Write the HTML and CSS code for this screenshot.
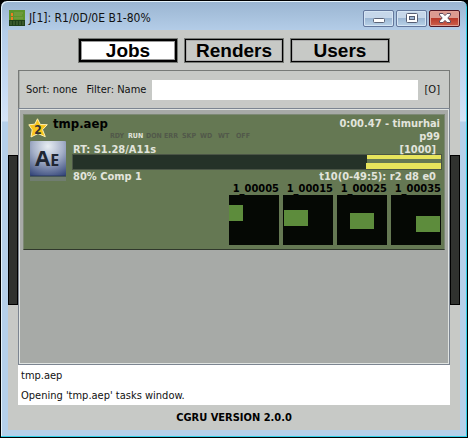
FILE: index.html
```html
<!DOCTYPE html>
<html lang="en">
<head>
<meta charset="utf-8">
<title>J[1]: R1/0D/0E B1-80%</title>
<link rel="stylesheet" href="styles.css">
</head>
<body>
<div class="window">
  <header class="titlebar">
    <svg class="app-icon" viewBox="0 0 16 16" aria-hidden="true">
      <rect width="16" height="16" fill="#5d942c"/>
      <rect y="10" width="16" height="6" fill="#20401a"/>
      <path d="M5 3h9M5 5h8M5 8h9" stroke="#82a04c"/>
      <path d="M1 12h14M1 14h14" stroke="#50713c" stroke-dasharray="2 1"/>
      <rect x="2" y="3" width="2" height="3" fill="#ef7a24"/>
      <rect x="2" y="7" width="2" height="3" fill="#ef7a24"/>
    </svg>
    <h1 class="title">J[1]: R1/0D/0E B1-80%</h1>
    <div class="controls">
      <button class="control" type="button" aria-label="Minimize">
        <svg viewBox="0 0 12 12"><rect x=".5" y="6.500" width="11" height="4" rx="1" fill="#fff" stroke="#5c6478"/></svg>
      </button>
      <button class="control" type="button" aria-label="Maximize">
        <svg viewBox="0 0 12 12"><rect x=".5" y="1.500" width="11" height="9" rx="1" fill="#fff" stroke="#565e74"/><rect x="3.500" y="4.500" width="5" height="3" fill="#9db5d2" stroke="#565e74"/></svg>
      </button>
      <button class="control close" type="button" aria-label="Close">
        <svg viewBox="0 0 12 12"><path d="M.5 1.500h3.500L6 3.600 8 1.500h3.500V3L8.800 6l2.700 3v1.500H8L6 8.400 4 10.500H.5V9l2.700-3L.5 3z" fill="#fff" stroke="#5f4a5c"/></svg>
      </button>
    </div>
  </header>
  <div class="client">
    <button class="rail" type="button" aria-label="Left panel"></button>
    <main class="content">
      <nav class="tabs">
        <button class="tab active" type="button">Jobs</button>
        <button class="tab" type="button">Renders</button>
        <button class="tab" type="button">Users</button>
      </nav>
      <div class="toolbar">
        <span>Sort: none</span>
        <label for="filter">Filter: Name</label>
        <input class="filter" id="filter" type="text">
        <span>[O]</span>
      </div>
      <section class="list">
        <article class="job">
          <div class="icons">
            <svg class="star" viewBox="0 0 20 20" role="img" aria-label="2">
              <path d="M9.500.8l2.800 5.700 7 .2-4.800 5 2.800 7-7.300-3.200L3 19l1.200-7.200L.8 6.800l6-.6z" fill="#f8c51c" stroke="#fff0b0" stroke-linejoin="round"/>
              <text class="star-text" x="10" y="16" text-anchor="middle">2</text>
            </svg>
            <svg class="service" viewBox="0 0 36 40" role="img" aria-label="AE">
              <defs>
                <radialGradient id="tile" cx=".5" cy=".15" r=".95">
                  <stop offset="0" stop-color="#e8eef2"/>
                  <stop offset=".45" stop-color="#a5b0c8"/>
                  <stop offset="1" stop-color="#334579"/>
                </radialGradient>
              </defs>
              <rect y="36" width="36" height="4" fill="#707d70"/>
              <rect width="36" height="35" rx="1" fill="url(#tile)"/>
              <path d="M0 35h36" stroke="#28365e"/>
              <text class="service-text" x="5" y="25">A<tspan class="service-small">E</tspan></text>
            </svg>
          </div>
          <h2 class="name">tmp.aep</h2>
          <div class="meta">0:00.47 - timurhai</div>
          <div class="states">
            <span>RDY</span><span class="on">RUN</span><span>DON</span><span>ERR</span><span>SKP</span><span>WD</span><span>WT</span><span>OFF</span>
          </div>
          <div class="meta">p99</div>
          <div class="run">RT: S1.28/A11s</div>
          <div class="meta inset">[1000]</div>
          <div class="progress">
            <i class="fill" style="margin-left:80%"></i>
            <i class="fill thick" style="margin-left:79.500%"></i>
          </div>
          <div class="block">80% Comp 1</div>
          <div class="meta inset">t10(0-49:5): r2 d8 e0</div>
          <div class="thumbs">
            <figure class="thumb"><figcaption>1_00005</figcaption><svg viewBox="0 0 50 50"><rect width="50" height="50" fill="#050804"/><rect y="10" width="14" height="16" fill="#5d8c3c"/></svg></figure>
            <figure class="thumb"><figcaption>1_00015</figcaption><svg viewBox="0 0 50 50"><rect width="50" height="50" fill="#050804"/><rect x="1" y="15" width="24" height="16" fill="#5d8c3c"/></svg></figure>
            <figure class="thumb"><figcaption>1_00025</figcaption><svg viewBox="0 0 50 50"><rect width="50" height="50" fill="#050804"/><rect x="13" y="18" width="24" height="16" fill="#5d8c3c"/></svg></figure>
            <figure class="thumb"><figcaption>1_00035</figcaption><svg viewBox="0 0 50 50"><rect width="50" height="50" fill="#050804"/><rect x="25" y="21" width="24" height="16" fill="#5d8c3c"/></svg></figure>
          </div>
        </article>
      </section>
      <div class="log">
        <p>tmp.aep</p>
        <p>Opening 'tmp.aep' tasks window.</p>
      </div>
      <footer class="version">CGRU VERSION 2.0.0</footer>
    </main>
    <button class="rail" type="button" aria-label="Right panel"></button>
  </div>
</div>
</body>
</html>
```
FILE: styles.css
```css
* { box-sizing: border-box; }

body {
  margin: 0;
  background: #000;
  color: #111;
  font: 11px/13px "DejaVu Sans Condensed", "DejaVu Sans", sans-serif;
}

h1, h2, p, figure { margin: 0; font-size: inherit; }

button { padding: 0; font: inherit; }

.window {
  display: flex;
  flex-direction: column;
  min-height: 100vh;
  padding: 0 6px 6px;
  border: 1px solid #000;
  border-radius: 7px 7px 0 0;
  background: linear-gradient(#9ab5d1, #b4cde8 30px, #c8dcf4 90px, #d5e4f6 120px, #b5d0ea 121px);
  box-shadow: inset -1px -1px #30cfe6, inset 1px 1px #e5f3fb;
}

.titlebar {
  display: flex;
  align-items: center;
  height: 29px;
  padding: 5px 1px 0 2px;
}

.app-icon { width: 16px; height: 16px; }

.title {
  flex: 1;
  margin-left: 4px;
  font-size: 12px;
  font-weight: 400;
}

.controls { display: flex; gap: 2px; }

.control {
  display: flex;
  align-items: center;
  justify-content: center;
  width: 31px;
  height: 17px;
  border: 1px solid #63779c;
  border-radius: 2px;
  background: linear-gradient(#c6d7ea 50%, #9cb7d4 50%, #b9d2e8);
  box-shadow: inset 0 0 0 1px #d5e5f4;
}

.control svg { width: 12px; height: 12px; }

.close {
  border-color: #501624;
  background: linear-gradient(#dc9a90 50%, #b93a2a 50%, #cd5f4c);
  box-shadow: inset 0 0 0 1px #e0a095;
}

.client {
  display: grid;
  grid-template-columns: 10px 1fr 10px;
  flex: 1;
  margin: 0 1px 1px;
  background: #c7c9c6;
}

.rail {
  align-self: center;
  height: 150px;
  border: 1px solid #000;
  background: #30322f;
}

.content { display: flex; flex-direction: column; min-width: 0; }

.tabs {
  display: flex;
  justify-content: center;
  gap: 6px;
  padding: 8px 0 7px;
}

.tab {
  width: 100px;
  height: 25px;
  border: 1px solid #777a76;
  background: #c7c9c6;
  box-shadow: inset 0 0 0 1px #000, inset 0 0 0 2px #aaa;
  color: #000;
  font: bold 19px/21px "Liberation Sans", sans-serif;
}

.active {
  background: #fff;
  box-shadow: inset 0 0 0 2px #000, inset 0 0 0 3px #999;
}

.toolbar {
  display: flex;
  align-items: center;
  gap: 9px;
  height: 38px;
  padding: 0 9px 0 7px;
  border: 1px solid #777a78;
  border-width: 1px 1px 0;
  box-shadow: inset 1px 0 #aaaeaa;
}

.filter {
  flex: 1;
  min-width: 0;
  height: 20px;
  margin: 0 -3px;
  border: 0;
  background: #fff;
  font: inherit;
}

.list {
  flex: 1;
  padding: 5px 4px 4px;
  border: 1px solid #7c8591;
  background: #a7aaa7;
  box-shadow: inset 0 0 0 1px #e0e4e2;
}

.job {
  display: grid;
  grid-template-columns: 29px 20px auto 1fr;
  grid-template-rows: 13px 13px 11px 16px 13px auto;
  padding: 2px 2px 4px 0;
  border: 1px solid #7d8975;
  border-bottom-color: #30382c;
  background: #657853;
  color: #e2e4dc;
  font-weight: 700;
}

.icons {
  grid-area: 1 / 1 / 6 / 3;
  display: flex;
  flex-direction: column;
  gap: 3px;
  padding: 1px 0 0 4px;
}

.star { width: 20px; height: 20px; }

.star-text { fill: #333; font-size: 12px; }

.service { width: 36px; height: 40px; margin-left: 2px; }

.service-text { fill: #202632; font: bold 22px "Open Sans", sans-serif; }

.service-small { font-size: 16px; }

.name {
  grid-area: 1 / 2 / 2 / 4;
  color: #000;
  font-size: 13px;
}

.meta {
  grid-column: 4;
  padding-right: 2px;
  text-align: right;
  white-space: nowrap;
}

.inset { padding-right: 6px; }

.states {
  grid-area: 2 / 3 / 3 / 4;
  display: grid;
  grid-template-columns: repeat(8, 18px);
  padding-left: 37px;
  color: #52594a;
  font: bold 7px/13px "DejaVu Sans Condensed", sans-serif;
}

.on { color: #e2e4dc; }

.run { grid-area: 3 / 3 / 4 / 4; }

.progress {
  grid-area: 4 / 3 / 5 / 5;
  display: flex;
  flex-direction: column;
  justify-content: space-between;
  margin-left: -1px;
  border: 1px solid #4b5546;
  background: linear-gradient(90deg, #253228 80%, #657853 80%);
}

.fill { height: 4px; background: #e7e45c; }

.thick { height: 6px; }

.block { grid-area: 5 / 3 / 6 / 4; }

.block, .inset { line-height: 14px; }

.run, .meta, .block { position: relative; }

.thumbs {
  grid-area: 6 / 1 / 7 / 5;
  display: flex;
  justify-content: flex-end;
  gap: 4px;
  padding-right: 1px;
}

.thumb {
  display: flex;
  flex-direction: column;
  align-items: flex-end;
  width: 50px;
  color: #000;
  line-height: 12px;
}

.thumb figcaption { position: relative; }

.thumb svg { width: 50px; height: 50px; }

.log {
  height: 40px;
  padding: 0 3px;
  background: #fff;
  line-height: 20px;
}

.log p { padding-top: 1px; height: 20px; }

.version {
  height: 25px;
  color: #000;
  font-weight: 700;
  line-height: 25px;
  text-align: center;
}
```
